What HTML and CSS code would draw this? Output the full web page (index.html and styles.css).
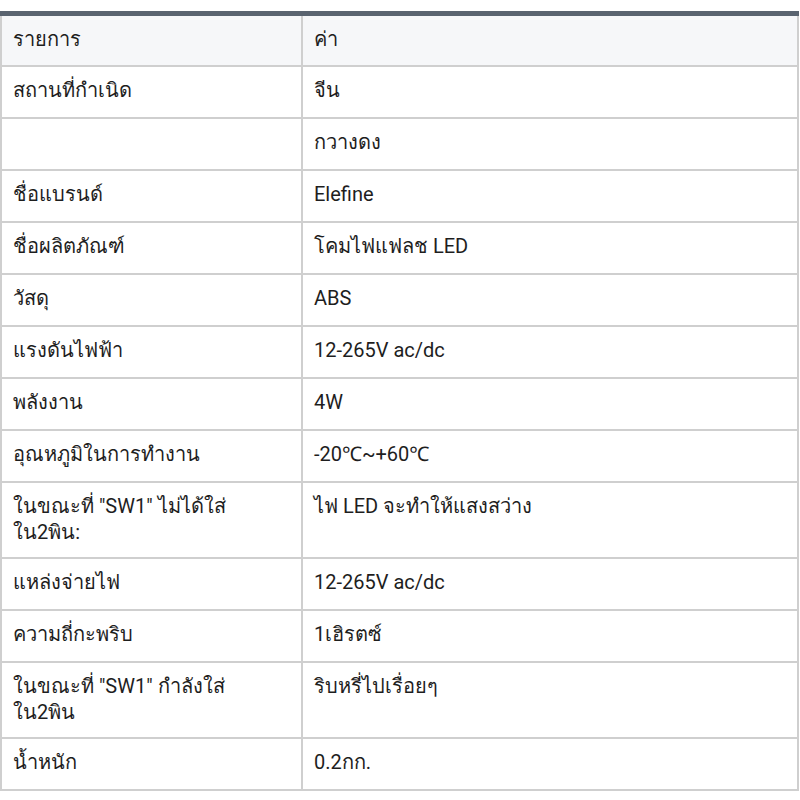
FILE: index.html
```html
<!DOCTYPE html>
<html lang="th">
<head>
<meta charset="utf-8">
<link rel="stylesheet" href="styles.css">
</head>
<body>
<table class="spec">
  <thead>
    <tr><th class="c1">รายการ</th><th>ค่า</th></tr>
  </thead>
  <tbody>
    <tr><td>สถานที่กำเนิด</td><td>จีน</td></tr>
    <tr><td></td><td>กวางดง</td></tr>
    <tr><td>ชื่อแบรนด์</td><td>Elefine</td></tr>
    <tr><td>ชื่อผลิตภัณฑ์</td><td>โคมไฟแฟลช LED</td></tr>
    <tr><td>วัสดุ</td><td>ABS</td></tr>
    <tr><td>แรงดันไฟฟ้า</td><td>12-265V ac/dc</td></tr>
    <tr><td>พลังงาน</td><td>4W</td></tr>
    <tr><td>อุณหภูมิในการทำงาน</td><td>-20℃~+60℃</td></tr>
    <tr><td>ในขณะที่ "SW1" ไม่ได้ใส่<br>ใน2พิน:</td><td>ไฟ LED จะทำให้แสงสว่าง</td></tr>
    <tr><td>แหล่งจ่ายไฟ</td><td>12-265V ac/dc</td></tr>
    <tr><td>ความถี่กะพริบ</td><td>1เฮิรตซ์</td></tr>
    <tr><td>ในขณะที่ "SW1" กำลังใส่<br>ใน2พิน</td><td>ริบหรี่ไปเรื่อยๆ</td></tr>
    <tr><td>น้ำหนัก</td><td>0.2กก.</td></tr>
  </tbody>
</table>
</body>
</html>
```

FILE: styles.css
```css
html, body {
  margin: 0;
  padding: 0;
  background: #ffffff;
}
body {
  padding-top: 11px;
  font-family: Roboto, "Noto Sans", sans-serif;
  font-size: 20px;
  color: #1e1e1e;
}
.spec {
  width: 799px;
  border-collapse: collapse;
  border-top: 5px solid #5a6470;
}
.spec tr {
  height: 52px;
}
.spec th,
.spec td {
  border: 2px solid #cfcfcf;
  padding: 10px 11px 12px;
  text-align: left;
  vertical-align: top;
  font-weight: normal;
  line-height: 26px;
}
.spec thead th {
  background: #f6f7f9;
  border-top: none;
}
.spec tr > :first-child {
  width: 277px;
}
```
